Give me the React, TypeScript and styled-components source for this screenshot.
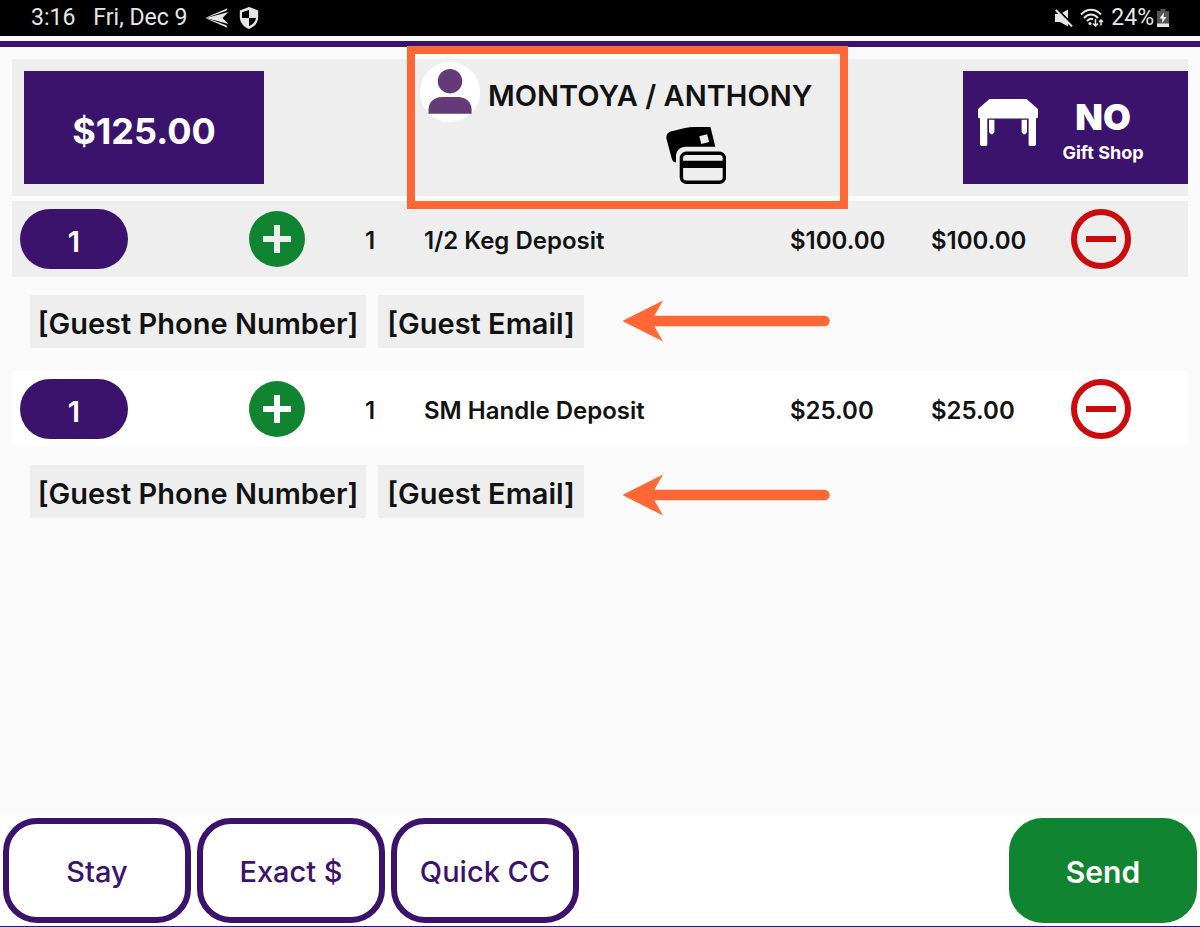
import React from "react";
import styled, { createGlobalStyle } from "styled-components";

const purple = "#3c136c";
const green = "#118432";
const red = "#cc0c0c";
const panel = "#eeeeee";
const ink = "#121212";
const highlight = "#ff6835";

const GlobalStyle = createGlobalStyle`
  *, *::before, *::after { box-sizing: border-box; }
  body { margin: 0; background: #fafafa; color: ${ink}; font-family: Inter, "Liberation Sans", sans-serif; }
  button { font-family: inherit; color: inherit; border: 0; background: none; padding: 0; margin: 0; cursor: pointer; }
  svg { display: block; flex: none; }
`;

const Screen = styled.div`
  min-height: 100vh;
  display: flex;
  flex-direction: column;
`;

const StatusBar = styled.header`
  height: 36px;
  padding: 0 31px;
  background: #000;
  color: #e6e6e6;
  display: flex;
  justify-content: space-between;
  align-items: center;
  font: 400 23px/36px Roboto, sans-serif;
`;

const StatusGroup = styled.div<{ $gap: number }>`
  display: flex;
  align-items: center;
  gap: ${(p) => p.$gap}px;
`;

const Main = styled.main`
  flex: 1;
  margin-top: 5px;
  border-top: 6px solid ${purple};
  padding: 12px;
`;

const OrderHeader = styled.section`
  display: grid;
  grid-template-columns: 240px 143fr 441px 115fr 225px;
  height: 137px;
  padding-left: 12px;
  background: ${panel};
`;

const TotalButton = styled.button`
  && { background: ${purple}; color: #fff; }
  margin: 12px 0;
  padding-top: 6px;
  font-size: 36px;
  font-weight: 700;
`;

const Customer = styled.div`
  grid-column: 3;
  position: relative;
  padding: 3px 13px;
`;

const CustomerFrame = styled.div`
  position: absolute;
  inset: -13px 0;
  z-index: 1;
  border: 8px solid ${highlight};
  pointer-events: none;
`;

const CustomerName = styled.h1`
  display: flex;
  align-items: center;
  gap: 8px;
  margin: 0 0 5px;
  height: 60px;
  font-size: 29px;
  line-height: 36px;
  font-weight: 600;
  white-space: nowrap;

  span { padding-top: 8px; }
`;

const PaymentButton = styled.button`
  display: block;
  && { margin: 0 0 0 246px; }
`;

const LocationButton = styled.button`
  && { background: ${purple}; color: #fff; margin: 12px 0; padding: 26px 20px 0 15px; }
  grid-column: 5;
  display: flex;
  align-items: flex-start;

  svg { margin-top: 2px; }
`;

const LocationText = styled.span`
  flex: 1;
  display: flex;
  flex-direction: column;
  align-items: center;
  font-size: 18px;
  line-height: 32px;
  font-weight: 700;

  strong { font-size: 36px; line-height: 40px; }
`;

const Items = styled.table`
  width: 100%;
  margin-top: 5px;
  table-layout: fixed;
  border-collapse: collapse;
  font-size: 24px;
  line-height: 28px;
  font-weight: 600;

  td { padding: 0; text-align: left; }
`;

const Column = styled.col<{ $width?: number }>`
  width: ${(p) => (p.$width ? `${p.$width}px` : "auto")};
`;

const ItemRow = styled.tr<{ $shaded: boolean }>`
  height: 76px;
  background: ${(p) => (p.$shaded ? panel : "#fff")};
`;

const TextCell = styled.td`
  && { padding-top: 4px; }
`;

const SeatCell = styled.td`
  && { padding-left: 8px; }
`;

const SeatButton = styled.button`
  && { background: ${purple}; color: #fff; padding-top: 4px; }
  display: block;
  width: 108px;
  height: 60px;
  border-radius: 30px;
  font-size: 29px;
  font-weight: 600;
`;

const IconButton = styled.button`
  display: block;
`;

const GuestFields = styled.div`
  display: flex;
  gap: 12px;
  padding: 18px 18px 23px;
`;

const GuestButton = styled.button<{ $width: number }>`
  && { background: ${panel}; padding-top: 4px; }
  width: ${(p) => p.$width}px;
  height: 53px;
  font-size: 29px;
  font-weight: 600;
  white-space: nowrap;
`;

const ArrowSlot = styled.div`
  margin-left: 26px;
`;

const Actions = styled.footer`
  display: flex;
  gap: 6px;
  padding: 3px;
  background: #fff;
  border-bottom: 1px solid ${purple};
`;

const ActionButton = styled.button<{ $primary?: boolean }>`
  && {
    border: 6px solid ${(p) => (p.$primary ? green : purple)};
    background: ${(p) => (p.$primary ? green : "#fff")};
    color: ${(p) => (p.$primary ? "#fff" : purple)};
    margin-left: ${(p) => (p.$primary ? "auto" : "0")};
    padding-top: 2px;
  }
  width: 188px;
  height: 105px;
  border-radius: 34px;
  font-size: ${(p) => (p.$primary ? 30 : 29)}px;
  font-weight: ${(p) => (p.$primary ? 600 : 500)};
`;

const SendIcon = () => (
  <svg width="24" height="20" viewBox="0 0 24 20" fill="#e6e6e6" aria-hidden="true">
    <path d="M0 10 22.400 .2 21.400 2.800 2.500 9.600ZM0 10 22.400 19.800 21.400 17.200 2.500 10.400Z" />
    <path d="M1 10 23.500 4 17.500 10 23.500 16Z" />
  </svg>
);

const ShieldIcon = () => (
  <svg width="20" height="22" viewBox="0 0 20 22" aria-hidden="true">
    <path d="M10 0 19.2 3.4V10c0 5.600-3.900 10-9.200 12C4.700 20 .8 15.600.8 10V3.400Z" fill="#e6e6e6" />
    <path d="M10 11h7c-.6 3.800-3.400 6.800-7 8.200ZM10 3v8H3V5.200Z" fill="#000" />
  </svg>
);

const MuteIcon = () => (
  <svg width="18" height="18" viewBox="0 0 18 18" aria-hidden="true">
    <path d="M0 5h5L13 .500v17L5 13H0Z" fill="#e6e6e6" />
    <path d="M2.500.500 18 16" stroke="#000" strokeWidth="2" />
    <path d="M.8 1 17 17.400" stroke="#e6e6e6" strokeWidth="2" />
  </svg>
);

const WifiIcon = () => (
  <svg width="24" height="20" viewBox="0 0 24 20" fill="none" stroke="#e6e6e6" aria-hidden="true">
    <path d="M1 6.500c5.500-6.500 14.500-6.500 20 0M4 10c4-4.600 10-4.600 14 0M7 13c1.700-2 4-2.600 6-1.800" strokeWidth="2" />
    <circle cx="10" cy="15.500" r="1.600" fill="#e6e6e6" stroke="none" />
    <path d="M15.500 11v7m-2.500-2.500 2.500 2.500 2.500-2.500M21 17.500v-5.500m-2 2 2-2 2 2" strokeWidth="1.500" />
  </svg>
);

const BatteryIcon = () => (
  <svg width="12" height="18" viewBox="0 0 12 18" aria-hidden="true">
    <path d="M3.500 0h5v2H12v16H0V2h3.500Z" fill="#555" />
    <path d="M0 14.500h12V18H0Z" fill="#e6e6e6" />
    <path d="M7 3.500 2.500 9.500h3L5 14l4.500-6h-3Z" fill="#fff" />
  </svg>
);

const AvatarIcon = () => (
  <svg width="60" height="60" viewBox="0 0 60 60" aria-hidden="true">
    <circle cx="30" cy="30" r="30" fill="#fff" />
    <g fill="#643a78">
      <circle cx="30" cy="19.200" r="12.200" />
      <path d="M8.500 51.800v-4C8.500 40 14.500 35 22 35h16c7.500 0 13.600 5 13.600 12.800v4Z" />
    </g>
  </svg>
);

const CardsIcon = () => (
  <svg width="60" height="57" viewBox="0 0 60 57" aria-hidden="true">
    <path
      fillRule="evenodd"
      d="M.4 11.500C0 8 1.500 5.600 4.800 4.600L19 1C22 .2 25 0 28 0h16.500L49.300 19.700H20c-6 0-10 4-10 9.600v6.200c-2.400-.3-3.800-1.700-4.400-4.500ZM33.300 9.200l2 7.800 7.800-2-2-7.800Z"
    />
    <rect x="15.400" y="26.200" width="43" height="29" rx="5" fill="none" stroke="#000" strokeWidth="3.400" />
    <path d="M15 33.800h44V41H15Z" />
  </svg>
);

const StallIcon = () => (
  <svg width="60" height="47" viewBox="0 0 60 47" fill="#fff" aria-hidden="true">
    <path d="M0 10 11.500 0h37L60 10v8.500L58 19.500V46l-1.500 1.200H52L50.600 46V19.500H9.300V46L8 47.200H3.500L2 46V19.500L0 18.500Z" />
    <path d="M11 20.700h5.400V33l-1.700 2.200h-1.800L11 33ZM43.600 20.700H49V33l-1.700 2.200h-2L43.600 33Z" />
  </svg>
);

const PlusIcon = () => (
  <svg width="56" height="56" viewBox="0 0 56 56" aria-hidden="true">
    <path
      fill={green}
      fillRule="evenodd"
      d="M28 0a28 28 0 1 1 0 56 28 28 0 0 1 0-56ZM25 14v11H14v6h11v11h6V31h11v-6H31V14Z"
    />
  </svg>
);

const MinusIcon = () => (
  <svg width="60" height="60" viewBox="0 0 60 60" fill="none" stroke={red} strokeWidth="6" aria-hidden="true">
    <circle cx="30" cy="30" r="27" />
    <path d="M15 30h30" />
  </svg>
);

const ArrowIcon = ({ y }: { y: number }) => (
  <svg width="208" height="53" viewBox="0 0 208 53" fill={highlight} aria-hidden="true">
    <path transform={`translate(0 ${y})`} d="M.4 0 41-20.500 32.300-5.200H202.500a5.200 5.200 0 0 1 0 10.400H32.300L41 20.500Z" />
  </svg>
);

const items = [
  { id: "keg", seat: 1, qty: 1, name: "1/2 Keg Deposit", price: "$100.00", total: "$100.00", arrowY: 26 },
  { id: "handle", seat: 1, qty: 1, name: "SM Handle Deposit", price: "$25.00", total: "$25.00", arrowY: 30 },
];

export default function App() {
  return (
    <>
      <GlobalStyle />
      <Screen>
        <StatusBar>
          <StatusGroup $gap={18}>
            <span>3:16</span>
            <span>Fri, Dec 9</span>
            <StatusGroup $gap={10}>
              <SendIcon />
              <ShieldIcon />
            </StatusGroup>
          </StatusGroup>
          <StatusGroup $gap={7}>
            <MuteIcon />
            <WifiIcon />
            <StatusGroup $gap={3}>
              <span>24%</span>
              <BatteryIcon />
            </StatusGroup>
          </StatusGroup>
        </StatusBar>

        <Main>
          <OrderHeader>
            <TotalButton type="button">$125.00</TotalButton>
            <Customer>
              <CustomerName>
                <AvatarIcon />
                <span>MONTOYA / ANTHONY</span>
              </CustomerName>
              <PaymentButton type="button" aria-label="Payment cards">
                <CardsIcon />
              </PaymentButton>
              <CustomerFrame />
            </Customer>
            <LocationButton type="button">
              <StallIcon />
              <LocationText>
                <strong>NO</strong>
                Gift Shop
              </LocationText>
            </LocationButton>
          </OrderHeader>

          <Items>
            <colgroup>
              <Column $width={237} />
              <Column $width={116} />
              <Column $width={59} />
              <Column />
              <Column $width={141} />
              <Column $width={140} />
              <Column $width={117} />
            </colgroup>
            <tbody>
              {items.map((item, index) => (
                <React.Fragment key={item.id}>
                  <ItemRow $shaded={index % 2 === 0}>
                    <SeatCell>
                      <SeatButton type="button">{item.seat}</SeatButton>
                    </SeatCell>
                    <td>
                      <IconButton type="button" aria-label={`Add ${item.name}`}>
                        <PlusIcon />
                      </IconButton>
                    </td>
                    <TextCell>{item.qty}</TextCell>
                    <TextCell>{item.name}</TextCell>
                    <TextCell>{item.price}</TextCell>
                    <TextCell>{item.total}</TextCell>
                    <td>
                      <IconButton type="button" aria-label={`Remove ${item.name}`}>
                        <MinusIcon />
                      </IconButton>
                    </td>
                  </ItemRow>
                  <tr>
                    <td colSpan={7}>
                      <GuestFields>
                        <GuestButton type="button" $width={336}>[Guest Phone Number]</GuestButton>
                        <GuestButton type="button" $width={206}>[Guest Email]</GuestButton>
                        <ArrowSlot>
                          <ArrowIcon y={item.arrowY} />
                        </ArrowSlot>
                      </GuestFields>
                    </td>
                  </tr>
                </React.Fragment>
              ))}
            </tbody>
          </Items>
        </Main>

        <Actions>
          <ActionButton type="button">Stay</ActionButton>
          <ActionButton type="button">Exact $</ActionButton>
          <ActionButton type="button">Quick CC</ActionButton>
          <ActionButton type="button" $primary>Send</ActionButton>
        </Actions>
      </Screen>
    </>
  );
}
